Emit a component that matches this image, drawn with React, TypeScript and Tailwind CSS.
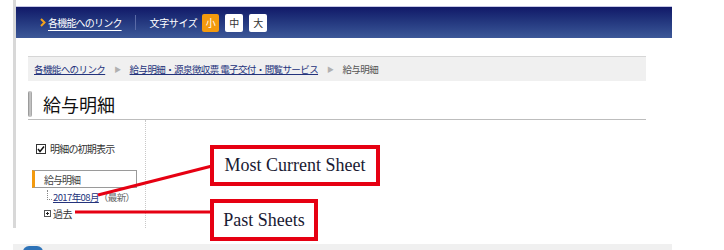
import React from "react";

const jp = "font-['Noto_Sans_CJK_JP',sans-serif]";

const Crumb = () => (
	<span className="mx-[9px] text-[7px] text-[#b0b0b0]">▶</span>
);

const App = () => {
	return (
		<div className={`relative w-[724px] h-[250px] overflow-hidden bg-white ${jp}`}>
			<div className="ml-[13px] w-[659px] h-[228px] border-l-[3px] border-[#d8d8d8] pt-[6px] flex flex-col">
				{/* header bar */}
				<div className="h-[32px] border-t border-[#c6c8e6] bg-gradient-to-b from-[#121868] to-[#3d5898] flex items-center pl-[24px] text-white">
					<svg width="6" height="9" viewBox="0 0 6 9" className="mr-[2px]">
						<polyline points="1,1 4.5,4.5 1,8" fill="none" stroke="#f2a21c" strokeWidth="2" />
					</svg>
					<span className="text-[10px] tracking-[-0.8px] underline underline-offset-[3px]">各機能へのリンク</span>
					<div className="ml-[13px] w-px h-[15px] bg-[#5a6aa6]" />
					<span className="ml-[14px] text-[10px] tracking-[-0.4px]">文字サイズ</span>
					<div className="ml-[5px] flex gap-[6px]">
						<div className="w-[17px] h-[18px] rounded-[2px] bg-[#f39a0e] text-white text-[10px] flex items-center justify-center">小</div>
						<div className="w-[18px] h-[18px] rounded-[2px] bg-white text-[#333] text-[10px] flex items-center justify-center">中</div>
						<div className="w-[18px] h-[18px] rounded-[2px] bg-white text-[#333] text-[10px] flex items-center justify-center">大</div>
					</div>
				</div>

				<div className="pl-[12px] pr-[26px] flex flex-col flex-1">
					{/* breadcrumb */}
					<div className="mt-[18px] h-[25px] bg-[#f0f0f0] border-t border-[#d6d6d6] flex items-center pl-[6px] text-[9.5px] tracking-[-0.6px]">
						<span className="text-[#24337c] underline">各機能へのリンク</span>
						<Crumb />
						<span className="text-[#24337c] underline">給与明細・源泉徴収票 電子交付・閲覧サービス</span>
						<Crumb />
						<span className="text-[#555]">給与明細</span>
					</div>

					{/* title */}
					<div className="pt-[10px] pb-[2px] border-b border-[#bdbdbd] flex items-center">
						<div className="w-[4px] h-[26px] rounded-[2px] bg-gradient-to-r from-[#8a8a8a] via-[#d0d0d0] to-[#9a9a9a]" />
						<span className="ml-[11px] text-[18px] leading-[26px] text-[#111]">給与明細</span>
					</div>

					{/* sidebar */}
					<div className="flex flex-1">
						<div className="w-[118px] border-r border-dotted border-[#c8c8c8] flex flex-col">
							<div className="mt-[21px] ml-[8px] h-[15px] flex items-center gap-[4px]">
								<svg width="10" height="10" viewBox="0 0 10 10">
									<rect x="0.5" y="0.5" width="9" height="9" fill="white" stroke="#333" />
									<polyline points="2,5 4,7.5 8,2.5" fill="none" stroke="#111" strokeWidth="1.5" />
								</svg>
								<span className="text-[10px] tracking-[-0.8px] text-[#333]">明細の初期表示</span>
							</div>
							<div className="mt-[14px] ml-[4px] w-[105px] h-[18px] border border-[#9a9a9a] border-l-[3px] border-l-[#f39a0e] flex items-center pl-[9px] text-[10px] tracking-[-1px] text-[#444]">
								給与明細
							</div>
							<div className="mt-[3px] ml-[19px] flex items-end h-[13px]">
								<div className="w-[5px] h-[10px] border-l border-b border-dotted border-[#888] mb-[4px]" />
								<span className="ml-[1px] text-[9.5px] leading-[13px] tracking-[-0.6px] text-[#24337c] underline">2017年08月</span>
								<span className="text-[9.5px] leading-[13px] tracking-[-0.6px] text-[#666]">（最新）</span>
							</div>
							<div className="mt-[2px] ml-[16px] h-[15px] flex items-center gap-[2px]">
								<svg width="7" height="7" viewBox="0 0 7 7">
									<rect x="0.5" y="0.5" width="6" height="6" fill="white" stroke="#555" />
									<line x1="2" y1="3.5" x2="5" y2="3.5" stroke="#222" />
									<line x1="3.5" y1="2" x2="3.5" y2="5" stroke="#222" />
								</svg>
								<span className="text-[10px] tracking-[-0.6px] text-[#333]">過去</span>
							</div>
						</div>
					</div>
				</div>
			</div>

			{/* next section peeking in */}
			<div className="mt-[16px] ml-[13px] w-[659px] h-[8px] bg-[#f0f0f0] flex items-start pl-[10px]">
				<div className="w-[20px] h-[6px] mt-[2px] rounded-t-full bg-[#2e73b8]" />
			</div>

			{/* annotation lines */}
			<svg className="absolute left-0 top-0" width="724" height="250">
				<line x1="98" y1="195" x2="212" y2="166" stroke="#e60012" strokeWidth="3" />
				<line x1="75" y1="212" x2="212" y2="212" stroke="#e60012" strokeWidth="3" />
			</svg>

			{/* callouts */}
			<div className="absolute left-[210px] top-[145px] w-[170px] h-[41px] border-[4px] border-[#e60012] bg-white flex items-center justify-center font-['Liberation_Serif',serif] text-[18px] text-[#1a1a33]">
				Most Current Sheet
			</div>
			<div className="absolute left-[210px] top-[199px] w-[108px] h-[42px] border-[4px] border-[#e60012] bg-white flex items-center justify-center font-['Liberation_Serif',serif] text-[18px] text-[#1a1a33]">
				Past Sheets
			</div>
		</div>
	);
};

export default App;
